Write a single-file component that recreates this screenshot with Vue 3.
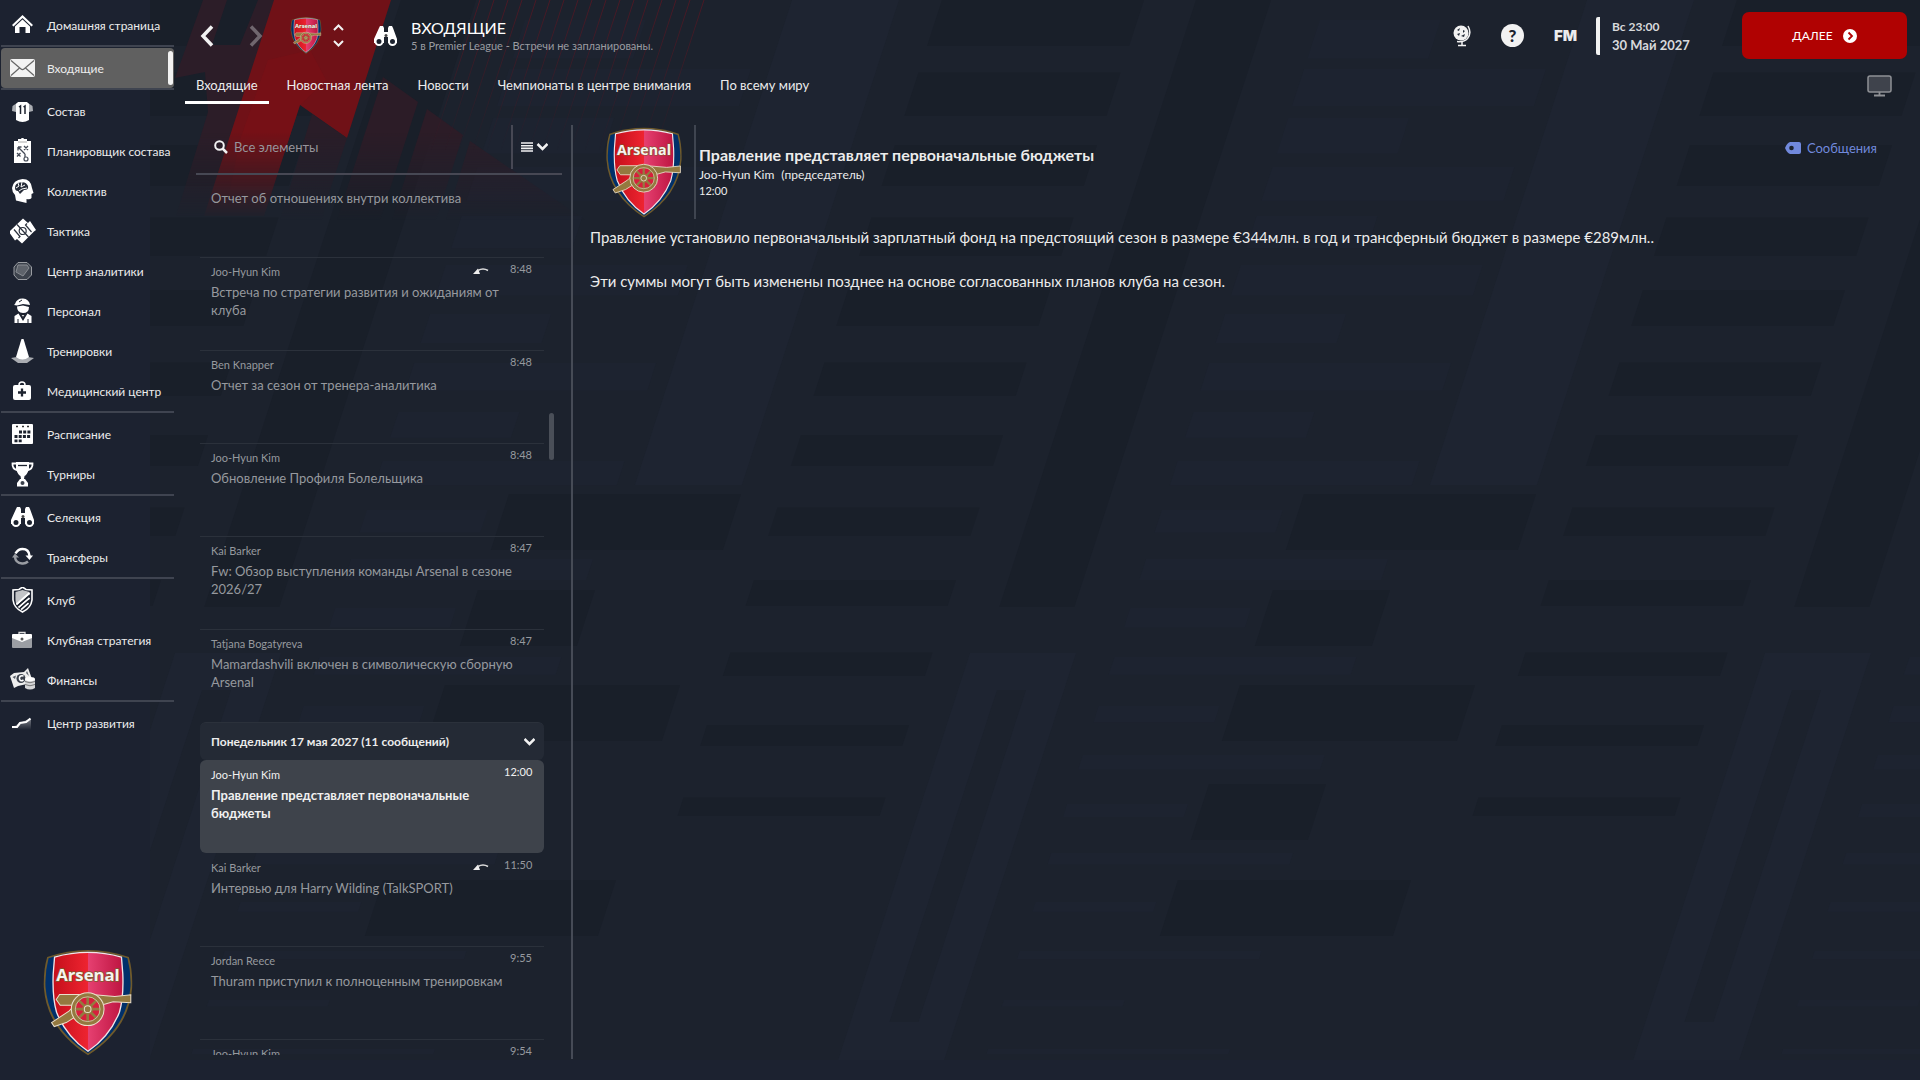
<script setup>
import { ref } from 'vue'

const nav = [
  [{ id: 'home', label: 'Домашняя страница' }],
  [{ id: 'mail', label: 'Входящие', active: true }],
  [
    { id: 'shirt', label: 'Состав' },
    { id: 'planner', label: 'Планировщик состава' },
    { id: 'brain', label: 'Коллектив' },
    { id: 'tactics', label: 'Тактика' },
    { id: 'hub', label: 'Центр аналитики' },
    { id: 'staff', label: 'Персонал' },
    { id: 'cone', label: 'Тренировки' },
    { id: 'medical', label: 'Медицинский центр' },
  ],
  [
    { id: 'calendar', label: 'Расписание' },
    { id: 'cup', label: 'Турниры' },
  ],
  [
    { id: 'binoculars', label: 'Селекция' },
    { id: 'transfer', label: 'Трансферы' },
  ],
  [
    { id: 'shield', label: 'Клуб' },
    { id: 'briefcase', label: 'Клубная стратегия' },
    { id: 'money', label: 'Финансы' },
  ],
  [{ id: 'growth', label: 'Центр развития' }],
]

const tabs = ['Входящие', 'Новостная лента', 'Новости', 'Чемпионаты в центре внимания', 'По всему миру']

const earlier = [
  { from: 'Joo-Hyun Kim', time: '8:48', title: 'Встреча по стратегии развития и ожиданиям от клуба', reply: true },
  { from: 'Ben Knapper', time: '8:48', title: 'Отчет за сезон от тренера-аналитика' },
  { from: 'Joo-Hyun Kim', time: '8:48', title: 'Обновление Профиля Болельщика' },
  { from: 'Kai Barker', time: '8:47', title: 'Fw: Обзор выступления команды Arsenal в сезоне 2026/27' },
  { from: 'Tatjana Bogatyreva', time: '8:47', title: 'Mamardashvili включен в символическую сборную Arsenal' },
]
const monday = [
  { from: 'Joo-Hyun Kim', time: '12:00', title: 'Правление представляет первоначальные бюджеты', active: true },
  { from: 'Kai Barker', time: '11:50', title: 'Интервью для Harry Wilding (TalkSPORT)', reply: true },
  { from: 'Jordan Reece', time: '9:55', title: 'Thuram приступил к полноценным тренировкам' },
  { from: 'Joo-Hyun Kim', time: '9:54', title: '' },
]
const search = ref('')

// Club crest, shown in the sidebar, the top bar and the message header
const CREST_BOX = '68 56 274 320'
const CREST = `
  <path d="M83 80Q205 38 327 80Q339 120 337 172Q328 295 205 374Q82 295 73 172Q71 120 83 80Z" fill="#6f5a2b"/>
  <path d="M87 84Q205 44 323 84Q334 125 332 170Q323 290 205 368Q87 290 78 170Q76 125 87 84Z" fill="#00306a"/>
  <path d="M105 80Q205 52 305 80L309 130Q312 200 299 245Q270 318 205 362Q140 318 111 245Q98 200 101 130Z" fill="url(#crestRed)" stroke="#f1e6e8" stroke-width="4"/>
  <path d="M120 192H215L285 198L333 193V217L280 214L244 224H122L110 207Z" fill="#94793f" stroke="#eadfcb" stroke-width="3"/>
  <path d="M166 224L148 242L96 276L104 288L140 276L178 252Z" fill="#94793f" stroke="#eadfcb" stroke-width="3"/>
  <circle cx="204" cy="236" r="49" fill="#94793f" stroke="#eadfcb" stroke-width="3"/>
  <circle cx="204" cy="236" r="26" fill="none" stroke="#d71f3c" stroke-width="19"/>
  <path d="M204 196V276M164 236H244M176 208L232 264M176 264L232 208" stroke="#94793f" stroke-width="8"/>
  <circle cx="204" cy="236" r="37" fill="none" stroke="#eadfcb" stroke-width="2"/>
  <circle cx="204" cy="236" r="10" fill="#94793f" stroke="#eadfcb" stroke-width="3"/>
  <text x="205" y="153" text-anchor="middle" font-family="Open Sans, sans-serif" font-weight="700" font-size="50" fill="#f7f4f0" stroke="#7b5a2c" stroke-width="4" paint-order="stroke">Arsenal</text>`

// Background pattern: slanted blocks, repeated across the page
const SLANT = 0.324
const PERIOD = 795
const LIGHT = '#1e2431'
const FAINT = '#1d2330'
const DARK = '#191f29'
const BASE = '#1c222d'
const blocks = [
  [792, 0, 107, 485, LIGHT],
  [1196, 0, 75, 607, DARK],
  [970, 653, 106, 407, LIGHT],
  [997, 690, 29, 332, BASE],
  [1304, 494, 232, 56, DARK],
  [1273, 590, 117, 56, DARK],
  [1240, 685, 235, 56, DARK],
  [1209, 784, 117, 56, DARK],
  [1178, 880, 233, 56, DARK],
]
for (let k = 0; k < 12; k++) blocks.push([942 - 23.5 * k, 72.5 * k, 202, 46 - 2.5 * k, DARK])
for (let k = -6; k < 16; k++) blocks.push([1225 - 15.8 * k, 314 + 49 * k, k % 2 ? 242 : 121, 29 - 1.6 * k, FAINT])
const shapes = []
for (let r = -2; r < 2; r++) {
  for (const [x, y, w, h, fill] of blocks) {
    const l = x + r * PERIOD
    const d = h * SLANT
    shapes.push({ fill, points: `${l},${y} ${l + w},${y} ${l + w - d},${y + h} ${l - d},${y + h}` })
  }
}
const pinstripes = Array.from({ length: 17 }, (_, i) => 480 + i * 14)
</script>

<template>
  <div class="page">
    <svg class="backdrop" viewBox="0 0 1920 1080" preserveAspectRatio="xMinYMin slice" aria-hidden="true">
      <defs>
        <linearGradient id="fade" x1="0" y1="0" x2="0" y2="1">
          <stop offset="0" stop-color="#fff" />
          <stop offset="0.6" stop-color="#fff" />
          <stop offset="1" stop-color="#000" />
        </linearGradient>
        <linearGradient id="fadeThin" x1="0" y1="0" x2="0" y2="1">
          <stop offset="0" stop-color="#fff" />
          <stop offset="1" stop-color="#000" />
        </linearGradient>
        <mask id="redMask" maskUnits="userSpaceOnUse" x="0" y="0" width="1920" height="220">
          <rect width="1920" height="220" fill="url(#fade)" />
        </mask>
        <mask id="lineMask" maskUnits="userSpaceOnUse" x="0" y="0" width="1920" height="150">
          <rect width="1920" height="150" fill="url(#fadeThin)" />
        </mask>
        <clipPath id="patternClip"><rect x="150" y="0" width="1770" height="1060" /></clipPath>
      </defs>
      <g clip-path="url(#patternClip)">
        <rect x="150" width="1770" height="1060" :fill="BASE" />
        <polygon v-for="(s, i) in shapes" :key="i" :points="s.points" :fill="s.fill" />
      </g>
      <g mask="url(#redMask)">
        <polygon points="203,0 227,0 212,45 240,45 258,0 276,0 206,216 176,216 208,112 205,72 175,78" fill="#2c1d28" />
        <polygon points="274,0 391,0 347,138 300,105 264,216 204,216" fill="#701117" />
        <polygon points="268,60 310,50 326,80 300,105 272,190 230,190 240,140" fill="#7e0f16" opacity="0.45" />
        <polygon points="312,114 347,138 330,190 322,220 280,220" fill="#2a1d28" />
        <polygon points="383,77 418,102 380,220 337,220" fill="#2c1c27" />
        <polygon points="427,109 463,135 436,220 392,220" fill="#2c1c27" />
        <polygon points="470,141 585,220 446,220" fill="#2b1d28" />
      </g>
      <g mask="url(#lineMask)" stroke="#561824" stroke-opacity="0.8">
        <line v-for="x in pinstripes" :key="x" :x1="x" y1="0" :x2="x - 49" y2="150" />
      </g>
    </svg>

    <svg class="sprite" aria-hidden="true">
      <defs>
        <linearGradient id="crestRed" x1="0" x2="1">
          <stop offset="0" stop-color="#c50f1b" /><stop offset="0.5" stop-color="#ee2430" />
          <stop offset="0.5" stop-color="#e64071" /><stop offset="1" stop-color="#bd1440" />
        </linearGradient>
        <linearGradient id="growthFill" x1="0" y1="0" x2="0" y2="1">
          <stop offset="0" stop-color="#fff" stop-opacity="0.4" /><stop offset="1" stop-color="#fff" stop-opacity="0" />
        </linearGradient>
      </defs>
      <symbol id="home" viewBox="0 0 26 26"><path d="M2 13L12.500 3L23 13L21.500 14.500L12.500 6L3.500 14.500Z" fill="#fff" /><path d="M5 14.500L12.500 7.500L20 14.500V21H15.500V15H9.500V21H5Z" fill="#fff" /></symbol>
      <symbol id="mail" viewBox="0 0 26 26"><rect y="4" width="25" height="18" rx="2" fill="#f2f2f2" /><path d="M1 5.500L11 14Q12.500 15.300 14 14L24 5.500M1 20.500L9.500 13M24 20.500L15.500 13" fill="none" stroke="#666" stroke-width="1.200" /></symbol>
      <symbol id="shirt" viewBox="0 0 26 26"><path d="M7 5L2.500 8L2 13L6 14V10ZM18 5L22.500 8L23 13L19 14V10Z" fill="#aaadb2" /><path d="M8 4H17L19 6V22Q12.500 26 6 22V6Z" fill="#fff" /><path d="M9 9L10.500 8V16M13.500 9L15 8V16" fill="none" stroke="#1c222e" stroke-width="1.500" /></symbol>
      <symbol id="planner" viewBox="0 0 26 26"><path d="M4 3H8V1H11Q12.500-2 14 1H17V3H21V25H4Z" fill="#fff" /><path d="M8 4H17" stroke="#aaa" /><path d="M8 9L15 16M8 9H11.500M8 9V12.500M14 8L18 12M18 8L14 12M7 15L10.500 18.500M10.500 15L7 18.500M15 16V19" fill="none" stroke="#444a56" stroke-width="1.300" /><circle cx="16" cy="21" r="2" fill="none" stroke="#444a56" stroke-width="1.200" /></symbol>
      <symbol id="brain" viewBox="0 0 26 26"><path d="M12.500 1Q21 1 22 10L23.500 15L21.500 16V20Q20 22 16.500 21V25L6 22.500L5 17Q2 14 2 10Q3 2 12.500 1Z" fill="#fff" /><path d="M5 10Q5 5 10 4.500Q16 3 18 8Q19 12 14 12L10 16L8 13Q5 13 5 10Z" fill="#272d39" /><path d="M8 5L9 8L6 10M12 4L11 9L15 7M9 13L12 11L17 10" fill="none" stroke="#fff" /></symbol>
      <symbol id="tactics" viewBox="0 0 26 26"><path d="M13 0.500L18 5L20 3L26 12L24 13.500L12 25.500L7 21L5 22.500L-1 14L1 12Z" fill="#fff" /><g fill="none" stroke="#2a303c" stroke-width="1.200"><path d="M7 6.500L18.500 19M4 11.500L10 18.500L8.500 20M21.500 14L15.500 7L17 5.500" /><circle cx="12.700" cy="13" r="3.500" /></g></symbol>
      <symbol id="hub" viewBox="0 0 26 26"><path d="M8 4.500H17L21.500 9V17L17 21.500H8L4 17V9Z" fill="#3c424c" stroke="#9a9da2" /><path d="M8 7H17L19 10L13 18L6 14Z" fill="#5e636b" stroke="#888c92" /></symbol>
      <symbol id="staff" viewBox="0 0 26 26"><path d="M5 6Q7 0 13 0.500Q19 1 20 7L13 6L7 7.500L4 7Z" fill="#fff" /><path d="M7 8.500L13 7.500L19 9Q19 15 13 15Q7 15 7 8.500Z" fill="#fff" /><path d="M4.500 25V18L8.500 15.500L13 23L17.500 15.500L21.500 18V25Z" fill="#fff" /><path d="M10.500 16.500L13 19.500L15.500 16.500ZM8 21V25M18 21V25M9 4L12 2" fill="#ccc" stroke="#1c222e" /></symbol>
      <symbol id="cone" viewBox="0 0 26 26"><path d="M1 20Q12 17 24 20L17 25H8Z" fill="#a9acb1" /><path d="M11.500 1H13.500L19 19Q12.500 24 6 19Z" fill="#fff" /></symbol>
      <symbol id="medical" viewBox="0 0 26 26"><rect x="3" y="7" width="18" height="15" rx="2" fill="#fff" /><path d="M9 7Q9 4 12 4Q15 4 15 7" fill="none" stroke="#fff" stroke-width="1.500" /><path d="M12 10.500V18.500M8 14.500H16" stroke="#1c222e" stroke-width="2.300" /></symbol>
      <symbol id="calendar" viewBox="0 0 26 26"><rect x="2" y="3" width="21" height="20" rx="1" fill="#fff" /><path d="M6 5.500H8M12 5.500H14M17 5.500H19" stroke="#333" stroke-width="1.300" /><path d="M9 11H21" stroke="#1c222e" stroke-width="2.800" stroke-dasharray="3 1.200" /><path d="M4.500 15.500H21M4.500 19.800H12" stroke="#1c222e" stroke-width="2.800" stroke-dasharray="3 1.200" /></symbol>
      <symbol id="cup" viewBox="0 0 26 26"><path d="M6 1H19V8Q17 14 14.500 15L14 18H11L10.500 15Q8 14 6 8Z" fill="#fff" /><path d="M7 2.500H2.500Q2 8 8 9.500M18 2.500H22.500Q23 8 17 9.500" fill="none" stroke="#fff" stroke-width="1.800" /><path d="M10 18H15L18 22V25.500H7V22Z" fill="#fff" /><path d="M8 4.500H17" stroke="#1c222e" stroke-width="1.300" /><circle cx="12.500" cy="22" r="2" fill="#3a404b" /></symbol>
      <symbol id="binoculars" viewBox="0 0 26 26"><path d="M6 5L7 3H10L11 5V9H15V5L16 3H19L20 5L24 16V20H15V14H11V20H1V16Z" fill="#fff" /><circle cx="6" cy="18.500" r="3.500" fill="#1c222e" stroke="#fff" stroke-width="2" /><circle cx="19.500" cy="18.500" r="3.500" fill="#1c222e" stroke="#fff" stroke-width="2" /><circle cx="13" cy="12.500" r="1.500" fill="#444" /></symbol>
      <symbol id="transfer" viewBox="0 0 26 26"><path d="M5.500 9.500Q8 5 12.500 5Q19 5 19.500 12" fill="none" stroke="#fff" stroke-width="2.500" /><path d="M15.500 11.500H23L19.500 16Z" fill="#fff" /><path d="M18 17.500Q15 20 12 19.500Q5.500 19 5 13" fill="none" stroke="#9a9da3" stroke-width="2.500" /><path d="M2 13.500H9L5 9.500Z" fill="#9a9da3" /></symbol>
      <symbol id="shield" viewBox="0 0 26 26"><path d="M12.500 0L16 2.500L22 3V13Q21 21 12.500 25Q4 21 3 13V3L9 2.500Z" fill="none" stroke="#fff" stroke-width="1.600" /><path d="M5.500 5L12.500 3L19.500 5V8L6.500 18Q5 14 5.500 5Z" fill="#c2c4c7" /><path d="M19.500 6L6.500 17.500M19.500 11L8.500 20.500M18.500 16L11 22.500" stroke="#fff" stroke-width="2" /><path d="M19.500 8.500L7.500 19M19 13.500L10 21.500" stroke="#1c222e" stroke-width="1.500" /></symbol>
      <symbol id="briefcase" viewBox="0 0 26 26"><path d="M2 8H22V20Q22 21 21 21H3Q2 21 2 20Z" fill="#9b9ea3" /><path d="M2 8Q2 7 3 7H21Q22 7 22 8V11L12 15L2 11Z" fill="#fff" /><path d="M9 7V5.500H15V7" fill="none" stroke="#ddd" stroke-width="1.300" /><circle cx="12" cy="12" r="1.500" fill="#555" /></symbol>
      <symbol id="money" viewBox="0 0 26 26"><path d="M0 9L4 6L14 5L18 1L22 12L17 17L8 19L4 21Z" fill="#eee" /><path d="M2.500 10L6 8.500L5 12ZM17 4L19 9L16 6Z" fill="#555b66" /><circle cx="11" cy="11.500" r="4.500" fill="#3a404b" /><path d="M13.500 9Q9 8 9.500 12Q10.500 15 13.500 13" fill="none" stroke="#fff" stroke-width="1.600" /><path d="M15 12H25V21Q20 24 15 21Z" fill="#d5d6d8" /><path d="M15 14.500Q20 17 25 14.500M15 17.500Q20 20 25 17.500" fill="none" stroke="#777" /><ellipse cx="20" cy="12" rx="5" ry="2" fill="#fff" /></symbol>
      <symbol id="growth" viewBox="0 0 26 26"><path d="M2 17L8 14L14 11L21 9V20H2Z" fill="url(#growthFill)" /><path d="M2 17H7L10 13L16 12L20.500 8.500" fill="none" stroke="#fff" stroke-width="2.200" /></symbol>
    </svg>

    <aside class="sidebar">
      <nav>
        <ul v-for="(group, g) in nav" :key="g" class="nav-group">
          <li v-for="item in group" :key="item.id">
            <a href="#" class="nav-item" :class="{ active: item.active }">
              <svg class="nav-icon" aria-hidden="true"><use :href="'#' + item.id" /></svg>
              <span>{{ item.label }}</span>
            </a>
          </li>
        </ul>
      </nav>
      <svg class="crest-big" :viewBox="CREST_BOX" role="img" aria-label="Arsenal" v-html="CREST"></svg>
    </aside>

    <div class="main">
      <header class="topbar">
        <button class="icon-btn" aria-label="Назад">
          <svg width="14" height="22" viewBox="0 0 14 22"><path d="M12 1.500L3 11L12 20.500" fill="none" stroke="#f2f2f2" stroke-width="3.500" /></svg>
        </button>
        <button class="icon-btn forward" aria-label="Вперёд">
          <svg width="14" height="22" viewBox="0 0 14 22"><path d="M2 1.500L11 11L2 20.500" fill="none" stroke="#f2f2f2" stroke-opacity="0.35" stroke-width="3.500" /></svg>
        </button>
        <svg class="crest-small" :viewBox="CREST_BOX" role="img" aria-label="Arsenal" v-html="CREST"></svg>
        <div class="stepper">
          <button class="icon-btn" aria-label="Предыдущий клуб"><svg width="11" height="7" viewBox="0 0 11 7"><path d="M1 6L5.500 1.500L10 6" fill="none" stroke="#f2f2f2" stroke-width="2" /></svg></button>
          <button class="icon-btn" aria-label="Следующий клуб"><svg width="11" height="7" viewBox="0 0 11 7"><path d="M1 1L5.500 5.500L10 1" fill="none" stroke="#f2f2f2" stroke-width="2" /></svg></button>
        </div>
        <button class="icon-btn scout" aria-label="Поиск"><svg class="nav-icon"><use href="#binoculars" /></svg></button>
        <div class="titles">
          <h1>ВХОДЯЩИЕ</h1>
          <p>5 в Premier League - Встречи не запланированы.</p>
        </div>
        <div class="tools">
          <button class="icon-btn" aria-label="Мир">
            <svg width="18" height="22" viewBox="0 0 18 22"><circle cx="8" cy="8" r="7.500" fill="#f2f2f2" /><path d="M4 5L7 3L6 6ZM4 9L7 8L6 11ZM10 5L12 6L10 8ZM8 11L12 9L11 12Z" fill="#222a36" /><path d="M15 1Q19 8 14.500 13.500Q11 17.500 4 16.500" fill="none" stroke="#f2f2f2" stroke-width="1.500" /><path d="M9 17V20M5 20.500H13" stroke="#f2f2f2" stroke-width="1.500" /></svg>
          </button>
          <button class="icon-btn help" aria-label="Помощь">?</button>
          <button class="icon-btn fm">FM</button>
        </div>
        <div class="clock">
          <span>Вс 23:00</span>
          <strong>30 Май 2027</strong>
        </div>
        <button class="continue">
          ДАЛЕЕ
          <svg width="14" height="14" viewBox="0 0 14 14" aria-hidden="true"><circle cx="7" cy="7" r="7" fill="#fff" /><path d="M5.500 3.500L9 7L5.500 10.500" fill="none" stroke="#b00202" stroke-width="1.800" /></svg>
        </button>
      </header>

      <div class="tabbar">
        <nav class="tabs">
          <a v-for="(t, i) in tabs" :key="t" href="#" :class="{ current: i === 0 }">{{ t }}</a>
        </nav>
        <button class="icon-btn" aria-label="Экран">
          <svg width="26" height="22" viewBox="0 0 26 22"><rect x="1" y="1" width="23" height="16" rx="2" fill="#3f434c" stroke="#8f9195" stroke-width="1.500" /><path d="M12.500 17V20M7 20.500H18" stroke="#8f9195" stroke-width="1.800" /></svg>
        </button>
      </div>

      <div class="content">
        <section class="inbox">
          <div class="search">
            <label class="field">
              <svg width="14" height="14" viewBox="0 0 14 14" aria-hidden="true"><circle cx="5.500" cy="5.500" r="4.300" fill="none" stroke="#f2f2f2" stroke-width="2" /><path d="M8.500 8.500L13 13" stroke="#f2f2f2" stroke-width="2.500" /></svg>
              <input v-model="search" type="text" placeholder="Все элементы" aria-label="Все элементы" />
            </label>
            <button class="icon-btn menu" aria-label="Фильтр">
              <svg width="27" height="10" viewBox="0 0 27 10"><path d="M0 1H12M0 3.700H12M0 6.400H12M0 9H12" stroke="#f2f2f2" stroke-width="1.600" /><path d="M16.500 2L21.500 7L26.500 2" fill="none" stroke="#f2f2f2" stroke-width="2.500" /></svg>
            </button>
          </div>

          <div class="scroller">
            <ul class="messages">
              <li class="message partial"><p class="subject">Отчет об отношениях внутри коллектива</p></li>
              <li v-for="(m, i) in earlier" :key="i" class="message">
                <span class="sender">{{ m.from }}</span>
                <svg v-if="m.reply" class="reply" viewBox="0 0 16 8"><path d="M0 7L5 1.500L7 7Z" fill="#eee" /><path d="M5 3.500Q10 0.500 15 3.500" fill="none" stroke="#ddd" stroke-width="1.500" /></svg>
                <time>{{ m.time }}</time>
                <p class="subject">{{ m.title }}</p>
              </li>
              <li class="day">
                <button>
                  Понедельник 17 мая 2027 (11 сообщений)
                  <svg width="11" height="8" viewBox="0 0 11 8" aria-hidden="true"><path d="M0.500 1L5.500 6L10.500 1" fill="none" stroke="#f2f2f2" stroke-width="2.500" /></svg>
                </button>
              </li>
              <li v-for="(m, i) in monday" :key="'m' + i" class="message" :class="{ active: m.active, after: i < 2 }">
                <span class="sender">{{ m.from }}</span>
                <svg v-if="m.reply" class="reply" viewBox="0 0 16 8"><path d="M0 7L5 1.500L7 7Z" fill="#eee" /><path d="M5 3.500Q10 0.500 15 3.500" fill="none" stroke="#ddd" stroke-width="1.500" /></svg>
                <time>{{ m.time }}</time>
                <p class="subject">{{ m.title }}</p>
              </li>
            </ul>
            <div class="track"><div class="thumb"></div></div>
          </div>
        </section>

        <article class="reader">
          <div class="reader-head">
            <svg class="crest-mid" :viewBox="CREST_BOX" role="img" aria-label="Arsenal" v-html="CREST"></svg>
            <div class="meta">
              <h2>Правление представляет первоначальные бюджеты</h2>
              <p class="author"><span>Joo-Hyun Kim</span><span>(председатель)</span></p>
              <time>12:00</time>
            </div>
            <a href="#" class="tag">
              <svg width="16" height="12" viewBox="0 0 16 12" aria-hidden="true"><path d="M5 0H14Q16 0 16 2V10Q16 12 14 12H5Q2 11 0 6Q2 1 5 0Z" fill="#7189dc" /><circle cx="6.500" cy="6" r="2.300" fill="#1c222e" /></svg>
              Сообщения
            </a>
          </div>
          <div class="body">
            <p>Правление установило первоначальный зарплатный фонд на предстоящий сезон в размере €344млн. в год и трансферный бюджет в размере €289млн..</p>
            <p>Эти суммы могут быть изменены позднее на основе согласованных планов клуба на сезон.</p>
          </div>
        </article>
      </div>
    </div>
  </div>
</template>

<style>
body {
  margin: 0;
  background: #1c2230;
}
</style>

<style scoped>
* {
  box-sizing: border-box;
}
ul, p, h1, h2 {
  margin: 0;
  padding: 0;
  list-style: none;
}
a {
  color: inherit;
  text-decoration: none;
}
button, input {
  font: inherit;
  color: inherit;
  background: none;
  border: 0;
  padding: 0;
}
.page {
  position: relative;
  display: flex;
  height: 100vh;
  overflow: hidden;
  background: #1c2230;
  color: #ececec;
  font-family: Lato, "Open Sans", sans-serif;
  font-size: 13px;
}
.backdrop {
  position: absolute;
  inset: 0;
  width: 100%;
  height: 100%;
}
.sprite {
  position: absolute;
  width: 0;
  height: 0;
}
.icon-btn {
  display: flex;
  align-items: center;
  justify-content: center;
  cursor: pointer;
}
.sidebar {
  position: relative;
  display: flex;
  flex-direction: column;
  flex: none;
  width: 176px;
  padding: 5px 2px 24px 1px;
  font-size: 12px;
}
.nav-group + .nav-group {
  padding-top: 1px;
  border-top: 2px solid #3f4450;
}
.nav-item {
  display: flex;
  align-items: center;
  gap: 11px;
  height: 40px;
  padding-left: 9px;
  white-space: nowrap;
}
.nav-item.active {
  position: relative;
  background: #606060;
  border-radius: 4px;
}
.nav-item.active::after {
  content: "";
  position: absolute;
  right: 1px;
  top: 3px;
  bottom: 3px;
  width: 5px;
  border-radius: 3px;
  background: #f2f2f2;
}
.nav-icon {
  flex: none;
  width: 26px;
  height: 26px;
  overflow: visible;
}
.crest-big {
  width: 92px;
  height: 107px;
  margin: auto auto 0 41px;
}
.main {
  position: relative;
  display: flex;
  flex-direction: column;
  flex: 1;
  min-width: 0;
}
.topbar {
  display: flex;
  align-items: center;
  flex: 0 0 71px;
  padding: 0 13px 0 24px;
}
.forward {
  margin-left: 35px;
}
.crest-small {
  width: 32px;
  height: 37px;
  margin-left: 27px;
}
.stepper {
  display: flex;
  flex-direction: column;
  gap: 9px;
  margin-left: 11px;
}
.scout {
  margin: 0 12px 0 29px;
}
.titles h1 {
  font-size: 16px;
  font-weight: 400;
  line-height: 20px;
  color: #fff;
}
.titles p {
  font-size: 11px;
  line-height: 16px;
  color: #9a9ca1;
}
.tools {
  display: flex;
  align-items: center;
  gap: 30px;
  margin-left: auto;
}
.help {
  width: 23px;
  height: 23px;
  border-radius: 50%;
  background: #f2f2f2;
  color: #1c222e;
  font-size: 17px;
  font-weight: 900;
}
.fm {
  font-family: Inter, sans-serif;
  font-size: 15px;
  font-weight: 900;
}
.clock {
  display: flex;
  flex-direction: column;
  justify-content: center;
  width: 146px;
  height: 38px;
  margin-left: 19px;
  padding-left: 12px;
  border-left: 4px solid #f2f2f2;
  border-radius: 2px;
  color: #d8d9db;
}
.clock span {
  font-size: 12px;
  font-weight: 700;
  line-height: 18px;
}
.clock strong {
  font-size: 13px;
  line-height: 18px;
}
.continue {
  display: flex;
  align-items: center;
  justify-content: center;
  gap: 10px;
  width: 165px;
  height: 47px;
  border-radius: 7px;
  background: #b00202;
  color: #fff;
  font-size: 12px;
}
.tabbar {
  display: flex;
  align-items: flex-start;
  justify-content: space-between;
  padding: 0 27px 0 9px;
}
.tabs {
  display: flex;
  gap: 7px;
}
.tabs a {
  padding: 0 11px 1px;
  line-height: 29px;
  border-bottom: 3px solid transparent;
}
.tabs a.current {
  border-image: linear-gradient(#fff, #fff) 1;
}
.tabbar .icon-btn {
  margin-top: 4px;
}
.content {
  display: flex;
  flex: 1;
  min-height: 0;
  padding: 21px 0 21px 20px;
}
.inbox {
  display: flex;
  flex-direction: column;
  flex: 0 0 377px;
  padding-right: 9px;
  border-right: 2px solid #464b56;
}
.search {
  display: flex;
  flex: 0 0 50px;
  padding-bottom: 4px;
  border-bottom: 2px solid #474854;
}
.field {
  display: flex;
  align-items: center;
  flex: 1;
  gap: 6px;
  padding-left: 18px;
}
.field input {
  width: 240px;
  outline: none;
}
.field input::placeholder {
  color: #96949b;
  opacity: 1;
}
.menu {
  width: 51px;
  padding-right: 6px;
  border-left: 2px solid #474854;
}
.scroller {
  display: flex;
  flex: 1;
  min-height: 0;
  margin-bottom: 4px;
  overflow: hidden;
}
.messages {
  flex: 1;
  padding-left: 4px;
}
.message {
  display: grid;
  grid-template-columns: 1fr auto 28px;
  grid-template-rows: 22px auto;
  column-gap: 15px;
  height: 93px;
  padding: 3px 12px 0 11px;
  border-top: 1px solid #2b313b;
  color: #96999e;
}
.message.partial {
  display: block;
  height: 82px;
  padding-top: 14px;
  border-top: 0;
}
.message.after {
  border-top-color: transparent;
}
.message.active {
  border-radius: 6px;
  background: #3e434b;
  color: #f0f0f0;
}
.sender {
  grid-column: 1;
  font-size: 11px;
  line-height: 22px;
}
.reply {
  grid-column: 2;
  width: 16px;
  height: 8px;
  margin-top: 6px;
}
.message time {
  grid-column: 3;
  text-align: right;
  font-size: 11px;
  line-height: 16px;
}
.subject {
  grid-column: 1 / -1;
  padding-right: 12px;
  line-height: 18px;
}
.active .subject {
  font-weight: 700;
}
.day button {
  display: flex;
  align-items: center;
  justify-content: space-between;
  width: 100%;
  height: 38px;
  padding: 0 9px 0 11px;
  border-top: 1px solid #2b313b;
  border-radius: 6px;
  background: #242a35;
  font-size: 12px;
  font-weight: 700;
}
.track {
  width: 18px;
  padding: 238px 0 0 5px;
}
.thumb {
  width: 5px;
  height: 47px;
  border-radius: 3px;
  background: #4a4f58;
}
.reader {
  flex: 1;
  min-width: 0;
  padding: 0 43px 0 17px;
}
.reader-head {
  display: flex;
  height: 94px;
  margin-bottom: 7px;
}
.crest-mid {
  flex: none;
  width: 78px;
  height: 91px;
  margin: 2px 11px 0 15px;
}
.meta {
  padding: 19px 0 0 3px;
  border-left: 2px solid #3f4550;
}
.meta h2 {
  font-size: 16px;
  line-height: 22px;
}
.author {
  display: flex;
  gap: 7px;
  font-size: 12px;
  line-height: 18px;
}
.meta time {
  display: block;
  font-size: 11px;
  line-height: 14px;
}
.tag {
  display: flex;
  align-items: center;
  gap: 6px;
  height: 18px;
  margin: 14px 0 0 auto;
  color: #7189dc;
}
.body {
  font-size: 15px;
  line-height: 22px;
}
.body p + p {
  margin-top: 22px;
}
</style>
